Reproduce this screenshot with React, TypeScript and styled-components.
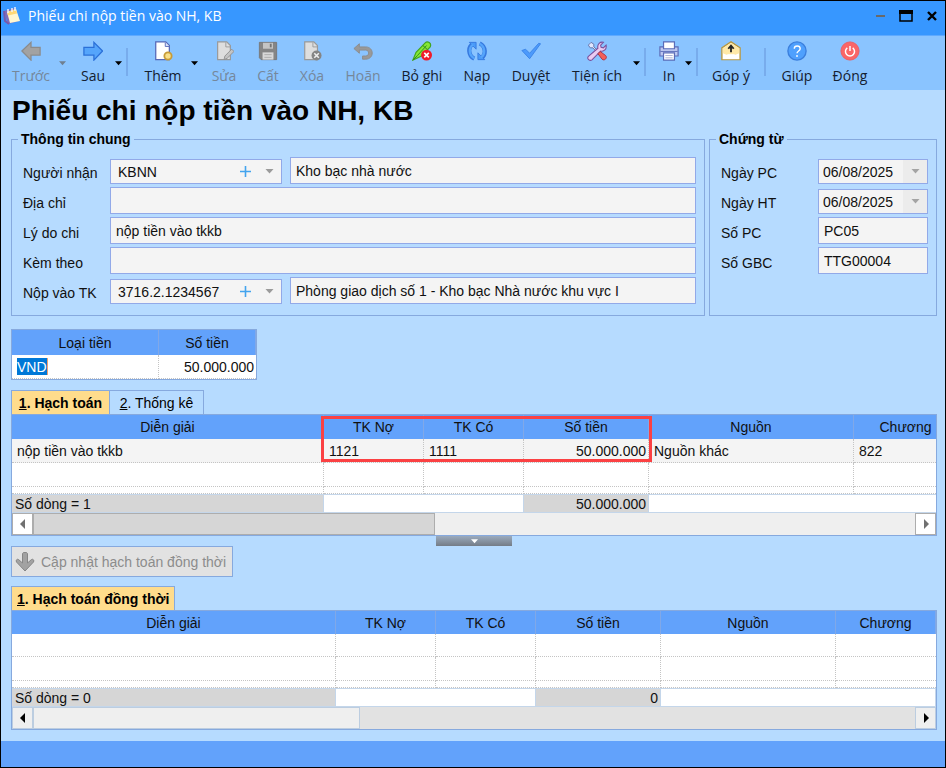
import React from "react";
import styled, { createGlobalStyle, css } from "styled-components";

const GlobalStyle = createGlobalStyle`
  *, *::before, *::after { box-sizing: border-box; }
  body { margin: 0; background: #b6dbff; }
  button, input, select { font: inherit; color: inherit; margin: 0; padding: 0; border: 0; border-radius: 0; background: none; }
`;

const Window = styled.div`
  display: flex;
  flex-direction: column;
  min-height: 100vh;
  border: 1px solid #000;
  background: #b6dbff;
  color: #101010;
  font: 14px/18px "Liberation Sans", Arial, sans-serif;
`;

const TitleBar = styled.header`
  display: flex;
  align-items: center;
  height: 35px;
  padding: 0 0 4px 2px;
  background: #3797ff;
  border-bottom: 1px solid #5faaff;
  color: #fff;
  font: 14px/20px "Open Sans", sans-serif;
`;
const WindowName = styled.span`
  flex: 1;
  margin-left: 8px;
`;
const WindowButton = styled.button`
  display: flex;
  align-items: center;
  justify-content: center;
  width: 26px;
  height: 20px;
`;

const Toolbar = styled.nav`
  display: flex;
  height: 54px;
  background: #8ac4ff;
  font: 14px/18px "Open Sans", sans-serif;
`;
const ToolButton = styled.button<{ $w: number }>`
  display: flex;
  flex-direction: column;
  align-items: center;
  gap: 6px;
  width: ${(p) => p.$w}px;
  padding-top: 5px;
  white-space: nowrap;
  color: #142030;
  &:disabled { color: #75879b; }
  svg { flex: none; }
`;
const Split = styled.div<{ $gap: number }>`
  display: flex;
  gap: ${(p) => p.$gap}px;
  margin-left: 6px;
`;
const MoreButton = styled.button`
  display: flex;
  align-items: center;
  justify-content: center;
  width: 10px;
`;
const Separator = styled.span`
  width: 2px;
  height: 28px;
  margin: 12px 3px 0;
  background: #78acec;
`;

const Content = styled.main`
  flex: 1;
  padding: 0 8px 10px 10px;
`;
const PageTitle = styled.h1`
  margin: 0;
  padding: 4px 0 0 1px;
  font-size: 28px;
  line-height: 34px;
  color: #000;
`;

const Groups = styled.div`
  display: grid;
  grid-template-columns: minmax(0, 1fr) 228px;
  gap: 4px;
  margin-bottom: 13px;
`;
const Group = styled.fieldset`
  min-width: 0;
  height: 186px;
  margin: 2px 0 0;
  padding: 9px 8px 0 11px;
  border: 1px solid #86a9de;
`;
const Legend = styled.legend`
  margin-left: -5px;
  padding: 0 3px;
  font-weight: bold;
  color: #000;
`;
const FieldRow = styled.div<{ $label: number }>`
  display: grid;
  grid-template-columns: ${(p) => p.$label}px minmax(0, 1fr);
  height: 30px;
`;
const Label = styled.label`
  line-height: 32px;
  white-space: nowrap;
`;
const Pair = styled.div`
  display: grid;
  grid-template-columns: 172px minmax(0, 1fr);
  gap: 8px;
`;
const boxed = css`
  border: 1px solid #92a9e8;
  background: #f4f4f4;
`;
const TextBox = styled.input`
  ${boxed}
  width: 100%;
  height: 27px;
  padding: 0 5px;
`;
const DropBox = styled.div`
  ${boxed}
  display: grid;
  height: 25px;
  margin-top: 2px;
  > * { grid-area: 1 / 1; min-width: 0; }
`;
const Select = styled.select`
  appearance: none;
  width: 100%;
  padding-left: 7px;
`;
const DateInput = styled.input`
  width: 100%;
  padding-left: 4px;
`;
const Adornments = styled.div`
  display: flex;
  justify-self: end;
  pointer-events: none;
`;
const SmallButton = styled.button<{ $shade?: boolean }>`
  display: flex;
  align-items: center;
  justify-content: center;
  width: 24px;
  pointer-events: auto;
  background: ${(p) => (p.$shade ? "#ececec" : "none")};
`;
const CaretSlot = styled.span`
  display: flex;
  align-items: center;
  justify-content: center;
  width: 24px;
`;

const Frame = styled.div<{ $w?: string }>`
  width: ${(p) => p.$w ?? "100%"};
  overflow: hidden;
  border: 1px solid #86a9de;
  background: #fff;
`;
const Table = styled.table<{ $min?: number }>`
  width: 100%;
  min-width: ${(p) => p.$min ?? 0}px;
  table-layout: fixed;
  border-collapse: separate;
  border-spacing: 0;
`;
const Th = styled.th<{ $h: number }>`
  position: relative;
  height: ${(p) => p.$h}px;
  padding: 0;
  font-weight: normal;
  background: #62a2fb;
  border-right: 1px solid #80a8e8;
  white-space: nowrap;
`;
const Td = styled.td<{ $h: number; $right?: boolean; $shade?: boolean }>`
  height: ${(p) => p.$h}px;
  padding: 0 ${(p) => (p.$right ? 2 : 5)}px 0 5px;
  line-height: 16px;
  text-align: ${(p) => (p.$right ? "right" : "left")};
  background: ${(p) => (p.$shade ? "#f4f4f4" : "#fff")};
  border-right: 1px dotted #c4c4c4;
  border-bottom: 1px dotted #c4c4c4;
  &:last-child { border-right: 0; }
`;
const SumCell = styled.td<{ $fill?: boolean; $right?: boolean }>`
  height: 19px;
  padding: 0 2px 0 3px;
  line-height: 16px;
  text-align: ${(p) => (p.$right ? "right" : "left")};
  background: ${(p) => (p.$fill ? "#d6d6d6" : "#fff")};
  border: 1px solid #c4d6ea;
  border-width: 1px 1px 1px 0;
`;
const Marker = styled.span`
  position: absolute;
  z-index: 1;
  top: 1px;
  left: -3px;
  width: 331px;
  height: 46px;
  border: 3px solid #fb4143;
  pointer-events: none;
`;
const CurrencyInput = styled.input`
  display: block;
  width: 31px;
  height: 17px;
  background: #0078d7;
  border-right: 1px solid #f0a070;
  color: #fff;
`;

const Tabs = styled.div`
  display: flex;
`;
const Tab = styled.button<{ $active?: boolean }>`
  height: 24px;
  min-width: 99px;
  padding: 0 5px;
  border: 1px solid #86a9de;
  border-bottom: 0;
  background: ${(p) => (p.$active ? "#ffdc8c" : "#b6dbff")};
  font-weight: ${(p) => (p.$active ? "bold" : "normal")};
  color: #000;
  & + & { margin-left: -1px; min-width: 95px; }
`;

const ScrollBar = styled.div<{ $dark?: boolean }>`
  display: flex;
  height: 22px;
  background: ${(p) => (p.$dark ? "#efefef" : "#e2e2e2")};
  color: ${(p) => (p.$dark ? "#707070" : "#000")};
  > * { border: 1px solid ${(p) => (p.$dark ? "#adadad" : "#bccde0")}; }
`;
const ScrollArrow = styled.button<{ $light?: boolean }>`
  display: flex;
  align-items: center;
  justify-content: center;
  width: 21px;
  background: ${(p) => (p.$light ? "#efefef" : "#fff")};
  &:last-child { margin-left: auto; }
`;
const Thumb = styled.div<{ $w: number; $dark?: boolean }>`
  width: ${(p) => p.$w}px;
  background: ${(p) => (p.$dark ? "#d6d6d6" : "#efefef")};
`;
const Splitter = styled.button`
  display: flex;
  align-items: center;
  justify-content: center;
  width: 76px;
  height: 10px;
  margin: 0 auto;
  background: linear-gradient(#9aaabd, #747c86);
`;
const UpdateButton = styled.button`
  display: flex;
  align-items: center;
  gap: 6px;
  width: 222px;
  height: 31px;
  padding-left: 3px;
  border: 1px solid #86a9de;
  background: #e2e2e2;
  color: #8c8c8c;
  white-space: nowrap;
`;
const Section = styled.section<{ $top: number }>`
  margin-top: ${(p) => p.$top}px;
`;
const StatusBar = styled.footer`
  height: 26px;
  background: #62a2fb;
`;

const Svg = ({ children }: { children: React.ReactNode }) => (
  <svg width="20" height="20" viewBox="0 0 22 22" fill="none" aria-hidden="true">{children}</svg>
);
const Caret = ({ color = "#000", w = 7 }: { color?: string; w?: number }) => (
  <svg width={w} height="5" viewBox="0 0 8 5" aria-hidden="true"><path d="M0 0h8L4 4.600z" fill={color} /></svg>
);
const Side = ({ right }: { right?: boolean }) => (
  <svg width="6" height="10" viewBox="0 0 6 10" aria-hidden="true">
    <path d={right ? "M1 0v10l5-5z" : "M5 0v10L0 5z"} fill="currentColor" />
  </svg>
);

const page = "M4 1h10l4 4v15.500H4z";
const icons: Record<string, React.ReactNode> = {
  back: <path d="M1 11 11 1.500V7h10v8.500H11V21z" fill="#a2a2a2" stroke="#8b8b8b" strokeWidth="1.400" />,
  next: <path d="M21.500 11 12 1.500V7H1v8.500h11V21z" fill="#55a5fb" stroke="#2b70d8" strokeWidth="1.400" />,
  add: <>
    <path d="M3 1h11l4 4v15.500H3z" fill="#fff" stroke="#5669b8" strokeWidth="1.400" />
    <path d="M13.500 1.500v4.500H18" fill="#dce4fa" stroke="#5669b8" />
    <circle cx="16.500" cy="16.500" r="4" fill="#f9e08a" stroke="#c79c38" strokeWidth="2" />
  </>,
  edit: <>
    <path d={page} fill="#dedede" stroke="#999" strokeWidth="1.300" />
    <path d="M13 1.500v5h5" stroke="#999" />
    <path d="m11 20.500 1-4 7.500-7.500 2.500 2.500-7.500 7.500z" fill="#c4c4c4" stroke="#8f8f8f" />
  </>,
  save: <>
    <path d="M1.500 1.500h19v19h-17l-2-2z" fill="#858585" stroke="#777" />
    <path d="M5.500 2h11v6.500h-11z" fill="#c4c4c4" /><path d="M13 3h2v4h-2z" fill="#747474" />
    <path d="M5 12.500h12v8H5z" fill="#d8d8d8" /><path d="M7 15h8M7 18h8" stroke="#aaa" />
  </>,
  del: <>
    <path d="M3 1h10l4 4v15.500H3z" fill="#dedede" stroke="#999" strokeWidth="1.300" />
    <path d="M12 1.500v5h5" stroke="#999" />
    <circle cx="16" cy="16" r="5.500" fill="#858585" /><path d="m13.500 13.500 5 5m0-5-5 5" stroke="#eee" strokeWidth="1.700" />
  </>,
  undo: <path d="M7 3 1 8.300l6 5.200V10h7c4.300 0 4.300 6.500 0 6.500h-3.500V20H14c9.500 0 9.500-13.500 0-13.500H7z" fill="#999" stroke="#8b8b8b" />,
  unpost: <>
    <path d="M1 21 4.500 12.500 14.500 2C17-.5 22 2 20 6.500L10.500 16.500z" fill="#85e834" stroke="#43a420" strokeWidth="1.300" />
    <path d="m6 16 10-11M12 5l5 4.500M1 21l5-5" stroke="#328d20" strokeWidth="1.100" />
    <circle cx="16" cy="15.500" r="6" fill="#ef1b2b" /><path d="m13.500 13 5 5m0-5-5 5" stroke="#fff" strokeWidth="1.800" />
  </>,
  reload: <>
    <path d="M8 19.500C1 16 1 6.500 6 3.500M14 2.500c7 3.500 7 13 2 16" stroke="#3679df" strokeWidth="4.600" />
    <path d="M2.500 1.500h7.500v7.500zM19.500 20.500H12V13z" fill="#4a9bf8" stroke="#3679df" />
    <path d="M8 19C1.500 15.500 2 7 6.500 4M14 3c6.500 3.500 6 12 1.500 15" stroke="#55a5fb" strokeWidth="2.600" />
  </>,
  approve: <path d="m1 10.500 4-1.500 4.500 4.500L19.500 2.500l2 .5L9.500 19.500z" fill="#4c9afc" stroke="#3a83e6" />,
  tools: <>
    <path d="m1.500 4.500 3-3 3 2v3l6 5.500-1.500 1.500-5.500-6h-3z" fill="#dfe7ff" stroke="#6570a5" />
    <path d="M1.500 17 12 8c-1-4.500 2.500-7.500 6-6.500l-3 3 .5 2.500 2.500.5 3-3c1 4.500-2.500 7.500-6 6.500L5.500 20.800C3 22.500-.5 19.500 1.500 17z" fill="#eacbf1" stroke="#79509d" strokeWidth="1.200" />
    <path d="m12 14 2.500-2.500 6 4.500c2.500 2.500-1.500 6.500-4 4z" fill="#f35f58" stroke="#a93145" />
  </>,
  print: <>
    <path d="M1 6.500h20v10H1z" fill="#bdc8f1" stroke="#5b6cb8" strokeWidth="1.300" />
    <path d="M5 1h12v7.500H5zM5 13h12v8H5z" fill="#fff" stroke="#5b6cb8" strokeWidth="1.300" />
    <path d="M1.500 11.500h19" stroke="#5b6cb8" /><path d="M7 16h8M7 18.500h8" stroke="#a4aad0" />
  </>,
  mail: <>
    <path d="M1 7.500 11 1l10 6.500v13H1z" fill="#fff" stroke="#b7973f" strokeWidth="1.500" />
    <path d="m2 8 9-6 9 6v5.500L16 15H6l-4-1.500z" fill="#ffe9a8" />
    <path d="m1.500 20 6-5.500h7l6 5.500" fill="#fff" />
    <path d="M11 12.500V7M8 8.500 11 5l3 3.500" stroke="#252525" strokeWidth="2" />
  </>,
  help: <><circle cx="11" cy="11" r="10" fill="#4fa0fd" stroke="#3b7fdd" strokeWidth="1.500" /><path d="M8 8.500c0-4 6.500-4 6.500 0 0 2.500-3.500 2.500-3.500 5M11 15.500v2" stroke="#fff" strokeWidth="1.500" /></>,
  close: <><circle cx="11" cy="11" r="10" fill="#fa6667" stroke="#ed5a60" /><path d="M8 7.500a5 5 0 1 0 6 0M11 5.500V11" stroke="#fff" strokeWidth="1.600" /></>,
};

type ToolProps = { icon: string; text: string; w: number; off?: boolean; gap?: number };
const Tool = ({ icon, text, w, off }: ToolProps) => (
  <ToolButton type="button" $w={w} disabled={off}><Svg>{icons[icon]}</Svg>{text}</ToolButton>
);
const SplitTool = (p: ToolProps) => (
  <Split $gap={p.gap ?? 0}>
    <Tool {...p} />
    <MoreButton type="button" disabled={p.off} aria-label={`${p.text} ▾`}><Caret color={p.off ? "#6f7f90" : "#000"} /></MoreButton>
  </Split>
);

const Lookup = ({ id, value }: { id: string; value: string }) => (
  <DropBox>
    <Select id={id} defaultValue={value}><option>{value}</option></Select>
    <Adornments>
      <SmallButton type="button" aria-label="Thêm">
        <svg width="11" height="11" viewBox="0 0 11 11"><path d="M5.500 0v11M0 5.500h11" stroke="#43a4ee" strokeWidth="1.600" /></svg>
      </SmallButton>
      <CaretSlot><Caret color="#9b9b9b" w={9} /></CaretSlot>
    </Adornments>
  </DropBox>
);
const DateField = ({ id, value }: { id: string; value: string }) => (
  <DropBox>
    <DateInput id={id} defaultValue={value} />
    <Adornments><SmallButton type="button" $shade aria-label="Chọn ngày"><Caret color="#a4a4a4" w={9} /></SmallButton></Adornments>
  </DropBox>
);

const heads = ["Diễn giải", "TK Nợ", "TK Có", "Số tiền", "Nguồn", "Chương"];
type GridProps = {
  widths: number[]; min: number; head: number; rows: string[][]; heights: number[];
  count: string; total: string; thumb: number; dark?: boolean; marked?: boolean;
};
const EntryGrid = ({ widths, min, head, rows, heights, count, total, thumb, dark, marked }: GridProps) => (
  <Frame>
    <Table $min={min}>
      <colgroup><col />{widths.map((w, i) => <col key={i} width={w} />)}</colgroup>
      <thead>
        <tr>{heads.map((h, i) => <Th key={h} $h={head} scope="col">{h}{marked && i === 1 && <Marker />}</Th>)}</tr>
      </thead>
      <tbody>
        {rows.map((r, n) => (
          <tr key={n}>{heads.map((h, i) => <Td key={h} $h={heights[n]} $shade={!!r.length} $right={i === 3}>{r[i]}</Td>)}</tr>
        ))}
      </tbody>
      <tfoot>
        <tr>
          <SumCell $fill>{count}</SumCell>
          <SumCell colSpan={2} />
          <SumCell $fill $right>{total}</SumCell>
          <SumCell colSpan={2} />
        </tr>
      </tfoot>
    </Table>
    <ScrollBar $dark={dark}>
      <ScrollArrow type="button" $light={!dark} aria-label="Cuộn trái"><Side /></ScrollArrow>
      <Thumb $w={thumb} $dark={dark} />
      <ScrollArrow type="button" $light={!dark} aria-label="Cuộn phải"><Side right /></ScrollArrow>
    </ScrollBar>
  </Frame>
);

export default function App() {
  return (
    <Window>
      <GlobalStyle />
      <TitleBar>
        <svg width="17" height="18" viewBox="0 0 17 18" aria-hidden="true">
          <path d="M1 4 12 1l4 13-11 3z" fill="#806bba" />
          <path d="m4 5 9-3 4 12-10 2z" fill="#fff7d1" /><path d="m4 5 9-3 1 4.500-9 2z" fill="#ffd977" />
          <path d="M5 6V2M9 5V1M12 4V0" stroke="#eef3ff" strokeWidth="1.500" /><path d="m1 4 1 10 4 3" stroke="#7858a8" fill="none" strokeWidth="2" />
        </svg>
        <WindowName>Phiếu chi nộp tiền vào NH, KB</WindowName>
        <WindowButton type="button" aria-label="Thu nhỏ"><svg width="9" height="3"><path d="M0 0h9v2H0z" fill="#696969" /></svg></WindowButton>
        <WindowButton type="button" aria-label="Phóng to"><svg width="14" height="12"><path d="M1 1h12v10H1z" fill="none" stroke="#000" strokeWidth="1.500" /><path d="M0 0h14v4H0z" fill="#000" /></svg></WindowButton>
        <WindowButton type="button" aria-label="Đóng cửa sổ"><svg width="10" height="10" viewBox="0 0 10 10"><path d="m1 1 8 8m0-8L1 9" stroke="#000" strokeWidth="2.400" /></svg></WindowButton>
      </TitleBar>

      <Toolbar>
        <SplitTool icon="back" text="Trước" w={48} gap={2} off />
        <SplitTool icon="next" text="Sau" w={40} />
        <Separator />
        <SplitTool icon="add" text="Thêm" w={52} />
        <Tool icon="edit" text="Sửa" w={50} off />
        <Tool icon="save" text="Cất" w={38} off />
        <Tool icon="del" text="Xóa" w={50} off />
        <Tool icon="undo" text="Hoãn" w={52} off />
        <Tool icon="unpost" text="Bỏ ghi" w={66} />
        <Tool icon="reload" text="Nạp" w={44} />
        <Tool icon="approve" text="Duyệt" w={64} />
        <SplitTool icon="tools" text="Tiện ích" w={56} gap={6} />
        <Separator />
        <SplitTool icon="print" text="In" w={28} />
        <Separator />
        <Tool icon="mail" text="Góp ý" w={60} />
        <Separator />
        <Tool icon="help" text="Giúp" w={56} />
        <Tool icon="close" text="Đóng" w={50} />
      </Toolbar>

      <Content>
        <PageTitle>Phiếu chi nộp tiền vào NH, KB</PageTitle>
        <Groups>
          <Group>
            <Legend>Thông tin chung</Legend>
            <FieldRow $label={87}>
              <Label htmlFor="receiver">Người nhận</Label>
              <Pair><Lookup id="receiver" value="KBNN" /><TextBox aria-label="Tên người nhận" defaultValue="Kho bạc nhà nước" /></Pair>
            </FieldRow>
            <FieldRow $label={87}><Label htmlFor="address">Địa chỉ</Label><TextBox id="address" /></FieldRow>
            <FieldRow $label={87}><Label htmlFor="reason">Lý do chi</Label><TextBox id="reason" defaultValue="nộp tiền vào tkkb" /></FieldRow>
            <FieldRow $label={87}><Label htmlFor="attached">Kèm theo</Label><TextBox id="attached" /></FieldRow>
            <FieldRow $label={87}>
              <Label htmlFor="account">Nộp vào TK</Label>
              <Pair><Lookup id="account" value="3716.2.1234567" /><TextBox aria-label="Tên tài khoản" defaultValue="Phòng giao dịch số 1 - Kho bạc Nhà nước khu vực I" /></Pair>
            </FieldRow>
          </Group>
          <Group>
            <Legend>Chứng từ</Legend>
            <FieldRow $label={97}><Label htmlFor="datePc">Ngày PC</Label><DateField id="datePc" value="06/08/2025" /></FieldRow>
            <FieldRow $label={97}><Label htmlFor="dateHt">Ngày HT</Label><DateField id="dateHt" value="06/08/2025" /></FieldRow>
            <FieldRow $label={97}><Label htmlFor="noPc">Số PC</Label><TextBox id="noPc" defaultValue="PC05" /></FieldRow>
            <FieldRow $label={97}><Label htmlFor="noGbc">Số GBC</Label><TextBox id="noGbc" defaultValue="TTG00004" /></FieldRow>
          </Group>
        </Groups>

        <Frame $w="246px">
          <Table>
            <colgroup><col /><col width={97} /></colgroup>
            <thead><tr><Th $h={25} scope="col">Loại tiền</Th><Th $h={25} scope="col">Số tiền</Th></tr></thead>
            <tbody><tr><Td $h={24}><CurrencyInput aria-label="Loại tiền" defaultValue="VND" /></Td><Td $h={24} $right>50.000.000</Td></tr></tbody>
          </Table>
        </Frame>

        <Section $top={10}>
          <Tabs role="tablist">
            <Tab type="button" role="tab" aria-selected $active><u>1</u>. Hạch toán</Tab>
            <Tab type="button" role="tab"><u>2</u>. Thống kê</Tab>
          </Tabs>
          <EntryGrid
            widths={[100, 100, 125, 205, 104]} min={946} head={24} heights={[24, 24, 7]}
            rows={[["nộp tiền vào tkkb", "1121", "1111", "50.000.000", "Nguồn khác", "822"], [], []]}
            count="Số dòng = 1" total="50.000.000" thumb={402} dark marked
          />
          <Splitter type="button" aria-label="Thu gọn"><Caret color="#fff" /></Splitter>
        </Section>

        <UpdateButton type="button" disabled>
          <svg width="20" height="20" viewBox="0 0 20 20" aria-hidden="true">
            <path d="M7.500 1.500c0-1.500 5-1.500 5 0V11l4-3.500c1.500-1 3 1 2 2.500L10 19 1.500 10C.5 8.500 2 6.500 3.500 7.500l4 3.500z" fill="#a2a2a2" stroke="#868686" />
          </svg>
          Cập nhật hạch toán đồng thời
        </UpdateButton>

        <Section $top={9}>
          <Tabs role="tablist">
            <Tab type="button" role="tab" aria-selected $active><u>1</u>. Hạch toán đồng thời</Tab>
          </Tabs>
          <EntryGrid
            widths={[100, 100, 125, 175, 100]} min={0} head={23} heights={[23, 24, 7]}
            rows={[[], [], []]} count="Số dòng = 0" total="0" thumb={327}
          />
        </Section>
      </Content>
      <StatusBar />
    </Window>
  );
}
